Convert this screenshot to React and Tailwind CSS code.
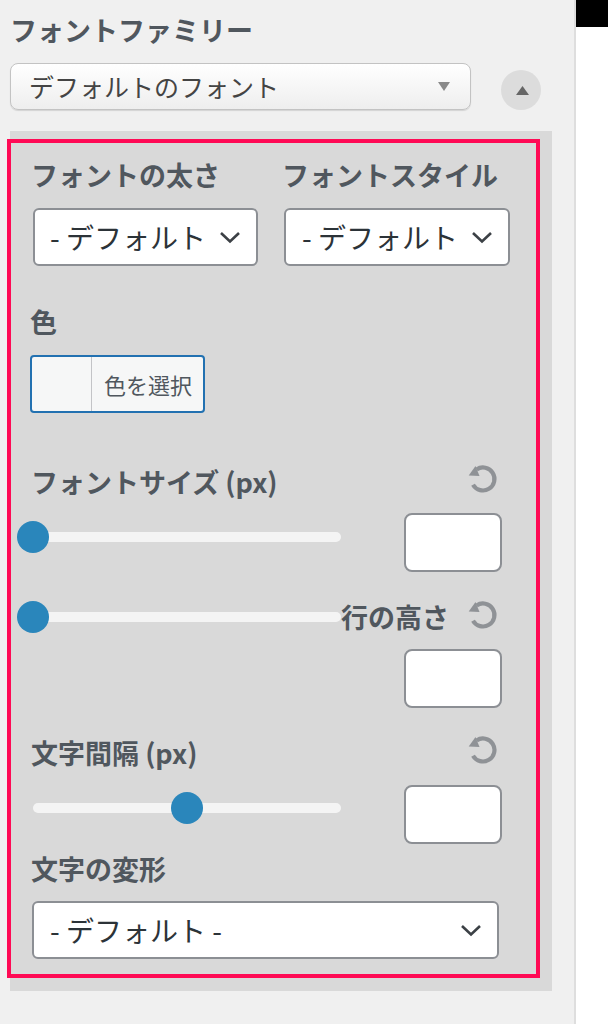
import React from 'react'

const label = "whitespace-nowrap text-[27px] font-bold leading-[32px] text-[#50575e]"

// circular arrow used by the reset buttons
const ResetIcon = ({ className = "" }) => (
  <svg width="32" height="32" viewBox="0 0 32 32" className={`shrink-0 ${className}`}>
    <path d="M9.6 6.4 A11.5 11.5 0 1 1 6 21.7" fill="none" stroke="#8f9296" strokeWidth="4.2" />
    <polygon points="1.7,12.5 8.5,3 12.5,13" fill="#8f9296" />
  </svg>
)

const Chevron = () => (
  <svg width="22" height="13" viewBox="0 0 22 13" className="shrink-0">
    <polyline points="2,2 11,10.5 20,2" fill="none" stroke="#3c4146" strokeWidth="2.6" />
  </svg>
)

const Dropdown = ({ className = "", text }) => (
  <div className={`flex h-[58px] items-center justify-between overflow-hidden whitespace-nowrap rounded-[6px] border-2 border-[#8c8f94] bg-white ${className}`}>
    <span className="text-[28px] leading-none text-[#2c3338]">{text}</span>
    <Chevron />
  </div>
)

const Slider = ({ value, className = "" }) => (
  <div className={`relative h-[10px] w-[308px] shrink-0 rounded-full bg-[#f4f4f4] ${className}`}>
    <div
      className="absolute top-1/2 h-[32px] w-[32px] -translate-x-1/2 -translate-y-1/2 rounded-full bg-[#2a86bb]"
      style={{ left: `${value}%` }}
    />
  </div>
)

const NumberBox = ({ className = "" }) => (
  <div className={`h-[59px] w-[98px] shrink-0 rounded-[8px] border-2 border-[#8c8f94] bg-white ${className}`} />
)

export default function App() {
  return (
    <div className="flex h-[1024px] w-[608px] overflow-hidden font-['Noto_Sans_CJK_JP',sans-serif]">
      <div className="w-[576px] shrink-0 border-r-2 border-[#dedede] bg-[#f0f0f0] pl-[10px]">
        <div className={`pt-[14px] ${label}`}>フォントファミリー</div>

        <div className="mt-[17px] flex items-start">
          <div className="flex h-[47px] w-[461px] items-center justify-between rounded-[8px] border border-[#c3c3c3] bg-linear-to-b from-white to-[#eeeeee] pl-[18px] pr-[20px] shadow-[0_1px_1px_rgba(0,0,0,0.12)]">
            <span className="text-[25px] leading-none text-[#444]">デフォルトのフォント</span>
            <svg width="12" height="9" viewBox="0 0 12 9"><polygon points="0,0 12,0 6,9" fill="#8a8a8a" /></svg>
          </div>
          <button className="ml-[30px] mt-[7px] flex h-[40px] w-[40px] items-center justify-center rounded-full bg-[#dcdcdc]">
            <svg width="13" height="9" viewBox="0 0 13 9" className="ml-[2px]"><polygon points="0,9 13,9 6.5,0" fill="#666" /></svg>
          </button>
        </div>

        <div className="mt-[21px] w-[542px] bg-[#d9d9d9] pb-[13px] pt-[8px]">
          <div className="-ml-[3px] w-[533px] border-4 border-[#ff0a55] pb-[15px] pl-[22px] pr-[26px] pt-[16px]">
            <div className="grid grid-cols-[225px_226px] gap-x-[26px]">
              <div className={`-ml-[2px] ${label}`}>フォントの太さ</div>
              <div className={`-ml-[2px] ${label}`}>フォントスタイル</div>
              <Dropdown className="mt-[17px] pl-[15px] pr-[15px]" text="- デフォルト" />
              <Dropdown className="mt-[17px] pl-[16px] pr-[15px]" text="- デフォルト" />
            </div>

            <div className={`-ml-[3px] mt-[40px] ${label}`}>色</div>
            <div className="-ml-[3px] mt-[17px] flex h-[58px] w-[175px] overflow-hidden rounded-[4px] border-2 border-[#2271b1] bg-[#f6f7f7]">
              <div className="w-[60px] border-r border-[#c3c4c7]" />
              <div className="flex items-center pl-[12px] text-[22px] text-[#50575e]">色を選択</div>
            </div>

            <div className="mt-[53px] flex h-[32px] items-start justify-between">
              <span className={`-ml-[2px] ${label}`}>フォントサイズ (px)</span>
              <ResetIcon className="-mt-[3px] mr-[11px]" />
            </div>
            <div className="mt-[15px] flex h-[59px] items-start">
              <Slider value={0} className="mt-[19px]" />
              <NumberBox className="ml-auto mr-[8px]" />
            </div>

            <div className="mt-[29px] flex h-[32px] items-start">
              <Slider value={0} className="mt-[11px]" />
              <span className={label}>行の高さ</span>
              <ResetIcon className="-mt-[2px] ml-auto mr-[11px]" />
            </div>
            <div className="mt-[16px] flex justify-end">
              <NumberBox className="mr-[8px]" />
            </div>

            <div className="mt-[29px] flex h-[32px] items-start justify-between">
              <span className={`-ml-[2px] ${label}`}>文字間隔 (px)</span>
              <ResetIcon className="-mt-[3px] mr-[11px]" />
            </div>
            <div className="mt-[16px] flex h-[59px] items-start">
              <Slider value={50} className="mt-[18px]" />
              <NumberBox className="ml-auto mr-[8px]" />
            </div>

            <div className={`-ml-[2px] mt-[9px] ${label}`}>文字の変形</div>
            <Dropdown className="-ml-px mt-[16px] w-[467px] pl-[16px] pr-[15px]" text="- デフォルト -" />
          </div>
        </div>
      </div>

      <div className="flex-1 bg-white">
        <div className="h-[27px] bg-black" />
      </div>
    </div>
  )
}
